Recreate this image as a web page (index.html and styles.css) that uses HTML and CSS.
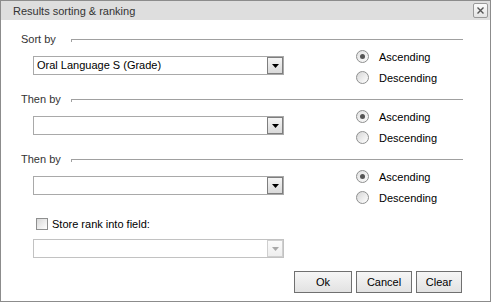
FILE: index.html
```html
<!DOCTYPE html>
<html lang="en">
<head>
    <meta charset="UTF-8">
    <title>Results sorting &amp; ranking</title>
    <link rel="stylesheet" href="styles.css">
</head>
<body>
    <div class="dialog">
        <div class="titlebar">
            <span class="title">Results sorting &amp; ranking</span>
            <span class="close">
                <svg width="7" height="7" viewBox="0 0 7 7"><path d="M0.5 0.5 L6.5 6.5 M6.5 0.5 L0.5 6.5" stroke="#555" stroke-width="1.4" fill="none"/></svg>
            </span>
        </div>

        <div class="content">
            <div class="group">
                <div class="group-head">
                    <span class="group-label">Sort by</span>
                    <span class="group-rule"></span>
                </div>
                <div class="group-body">
                    <div class="combo">
                        <span class="combo-value">Oral Language S (Grade)</span>
                        <span class="combo-btn"><svg width="7" height="4" viewBox="0 0 7 4"><path d="M0 0 H7 L3.5 4 Z" fill="#000"/></svg></span>
                    </div>
                    <div class="order">
                        <div class="radio checked"><span class="radio-mark"></span>Ascending</div>
                        <div class="radio"><span class="radio-mark"></span>Descending</div>
                    </div>
                </div>
            </div>

            <div class="group">
                <div class="group-head">
                    <span class="group-label">Then by</span>
                    <span class="group-rule"></span>
                </div>
                <div class="group-body">
                    <div class="combo">
                        <span class="combo-value"></span>
                        <span class="combo-btn"><svg width="7" height="4" viewBox="0 0 7 4"><path d="M0 0 H7 L3.5 4 Z" fill="#000"/></svg></span>
                    </div>
                    <div class="order">
                        <div class="radio checked"><span class="radio-mark"></span>Ascending</div>
                        <div class="radio"><span class="radio-mark"></span>Descending</div>
                    </div>
                </div>
            </div>

            <div class="group">
                <div class="group-head">
                    <span class="group-label">Then by</span>
                    <span class="group-rule"></span>
                </div>
                <div class="group-body">
                    <div class="combo">
                        <span class="combo-value"></span>
                        <span class="combo-btn"><svg width="7" height="4" viewBox="0 0 7 4"><path d="M0 0 H7 L3.5 4 Z" fill="#000"/></svg></span>
                    </div>
                    <div class="order">
                        <div class="radio checked"><span class="radio-mark"></span>Ascending</div>
                        <div class="radio"><span class="radio-mark"></span>Descending</div>
                    </div>
                </div>
            </div>

            <div class="rank">
                <span class="checkbox"></span>
                <span class="rank-label">Store rank into field:</span>
            </div>
            <div class="combo disabled rank-combo">
                <span class="combo-value"></span>
                <span class="combo-btn"><svg width="7" height="4" viewBox="0 0 7 4"><path d="M0 0 H7 L3.5 4 Z" fill="#a8a8a8"/></svg></span>
            </div>

            <div class="actions">
                <span class="button btn-ok">Ok</span>
                <span class="button btn-cancel">Cancel</span>
                <span class="button btn-clear">Clear</span>
            </div>
        </div>
    </div>
</body>
</html>
```

FILE: styles.css
```css
body {
    margin: 0;
    font-family: "Liberation Sans", Arial, sans-serif;
    font-size: 11px;
    color: #111;
    background: #fff;
}
.dialog {
    width: 491px;
    height: 302px;
    box-sizing: border-box;
    border: 1px solid #8c8c8c;
    background: #fff;
}
.titlebar {
    height: 19px;
    background: #dedede;
    display: flex;
    align-items: center;
    justify-content: space-between;
    padding: 0 2px 0 12px;
}
.title {
    color: #333;
}
.close {
    width: 15px;
    height: 15px;
    box-sizing: border-box;
    border: 1px solid #9a9a9a;
    border-radius: 2px;
    background: linear-gradient(#fbfbfb, #e4e4e4);
    display: flex;
    align-items: center;
    justify-content: center;
}
.content {
    padding: 12px 27px 0 20px;
}
.group {
    margin-bottom: 4px;
}
.group-head {
    display: flex;
    align-items: center;
    height: 14px;
}
.group-label {
    width: 50px;
    color: #333;
}
.group-rule {
    flex: 1;
    height: 2px;
    border-top: 1px solid #a0a0a0;
    border-left: 1px solid #a0a0a0;
    margin-top: 2px;
}
.group-body {
    display: flex;
    height: 42px;
    padding-left: 12px;
}
.combo {
    margin-top: 10px;
    width: 251px;
    height: 19px;
    box-sizing: border-box;
    border: 1px solid #a9a9a9;
    display: flex;
    background: #fff;
}
.combo-value {
    flex: 1;
    padding-left: 3px;
    line-height: 17px;
    color: #000;
}
.combo-btn {
    width: 16px;
    box-sizing: border-box;
    border: 1px solid #7e7e7e;
    background: linear-gradient(#f5f5f5, #d9d9d9);
    display: flex;
    align-items: center;
    justify-content: center;
}
.order {
    margin-left: 72px;
    display: flex;
    flex-direction: column;
}
.radio {
    height: 21px;
    display: flex;
    align-items: center;
    color: #000;
}
.radio-mark {
    width: 13px;
    height: 13px;
    box-sizing: border-box;
    border: 1px solid #8e8f8f;
    border-radius: 50%;
    background: linear-gradient(135deg, #d6d6d6, #ffffff);
    margin-right: 10px;
    display: flex;
    align-items: center;
    justify-content: center;
}
.radio.checked .radio-mark {
    background: linear-gradient(135deg, #e2e2e2, #fafafa);
}
.radio.checked .radio-mark::after {
    content: "";
    width: 5px;
    height: 5px;
    border-radius: 50%;
    background: #555;
}
.rank {
    display: flex;
    align-items: center;
    height: 14px;
    margin-top: 9px;
    padding-left: 15px;
}
.checkbox {
    width: 12px;
    height: 12px;
    box-sizing: border-box;
    border: 1px solid #8e8f8f;
    background: linear-gradient(135deg, #d8d8d8, #ffffff);
}
.rank-label {
    margin-left: 4px;
    color: #000;
}
.rank-combo {
    margin: 8px 0 0 12px;
}
.combo.disabled {
    border-color: #c2c2c2;
}
.combo.disabled .combo-btn {
    border-color: #cfcfcf;
    background: linear-gradient(#fbfbfb, #eeeeee);
}
.actions {
    display: flex;
    justify-content: flex-end;
    gap: 4px;
    margin-top: 13px;
    padding-right: 1px;
}
.button {
    height: 22px;
    box-sizing: border-box;
    border: 1px solid #707070;
    background: linear-gradient(#f6f6f6, #e2e2e2);
    display: flex;
    align-items: center;
    justify-content: center;
    color: #000;
}
.btn-ok {
    width: 58px;
}
.btn-cancel {
    width: 56px;
}
.btn-clear {
    width: 46px;
}
```
